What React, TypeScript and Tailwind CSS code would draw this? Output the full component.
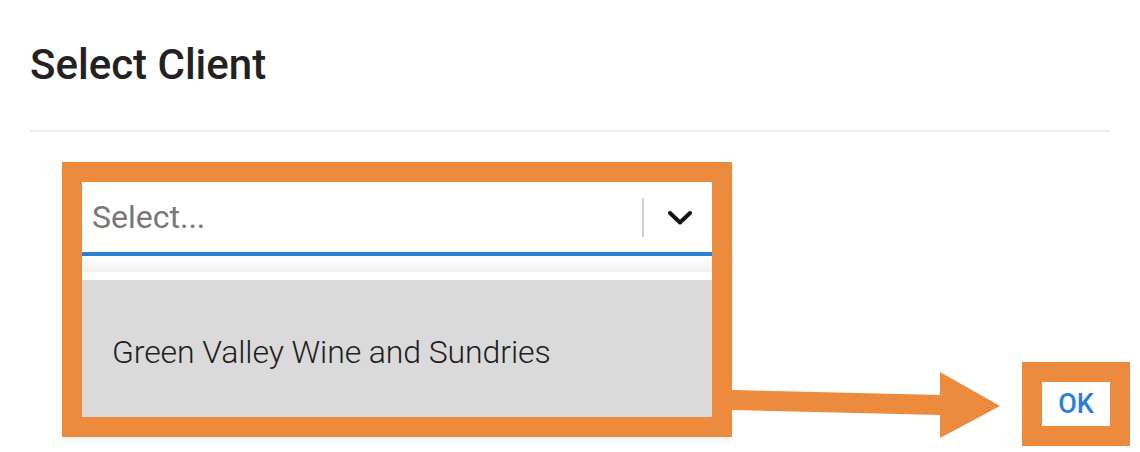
import React from 'react';

const ORANGE = '#ec8a3e';

const Chevron: React.FC = () => (
  <svg width="26" height="16" viewBox="0 0 26 16" fill="none">
    <polyline points="3,3 13,12.5 23,3" stroke="#111" strokeWidth="4" strokeLinecap="round" strokeLinejoin="round" />
  </svg>
);

const Arrow: React.FC = () => (
  <svg width="270" height="70" viewBox="0 0 270 70" className="shrink-0">
    <polygon points="0,20 209,25 209,45 0,40" fill={ORANGE} />
    <polygon points="208,2 268,36 208,68" fill={ORANGE} />
  </svg>
);

export default function App() {
  return (
    <div className="w-[1140px] h-[452px] bg-white overflow-hidden font-['Roboto',sans-serif]">
      <div className="px-[30px] pt-[44px]">
        <h2 className="text-[42px] leading-none font-medium text-[#222]">Select Client</h2>
        <div className="mt-[44px] h-[2px] bg-[#ececec]" />
      </div>

      <div className="flex items-start pl-[62px] mt-[30px]">
        {/* highlighted select + open menu */}
        <div className="w-[670px] shrink-0 border-[20px] border-[#ec8a3e] shadow-[0_4px_6px_rgba(0,0,0,0.05)]">
          <div className="flex items-center h-[70px] bg-white pl-[10px]">
            <span className="flex-1 text-[32px] font-normal text-[#777]">Select...</span>
            <div className="w-[2px] h-[39px] bg-[#cfcfcf]" />
            <div className="w-[68px] flex items-center justify-center pt-[2px] pl-[4px]">
              <Chevron />
            </div>
          </div>
          <div className="h-[4px] bg-[#2a80d8]" />
          <div className="h-[16px] bg-gradient-to-b from-white to-[#f1f1f1]" />
          <div className="h-[8px] bg-white" />
          <div className="h-[137px] bg-[#dadada] flex items-center pl-[30px] pt-[6px]">
            <span className="text-[32px] font-light text-[#1e1e1e] tracking-[-0.1px]">Green Valley Wine and Sundries</span>
          </div>
        </div>

        <div className="mt-[208px]">
          <Arrow />
        </div>

        <div className="ml-[20px] mt-[200px] border-[20px] border-[#ec8a3e]">
          <div className="w-[68px] h-[44px] bg-white flex items-center justify-center">
            <span className="text-[27px] font-medium text-[#2a80d8] leading-none">OK</span>
          </div>
        </div>
      </div>
    </div>
  );
}
